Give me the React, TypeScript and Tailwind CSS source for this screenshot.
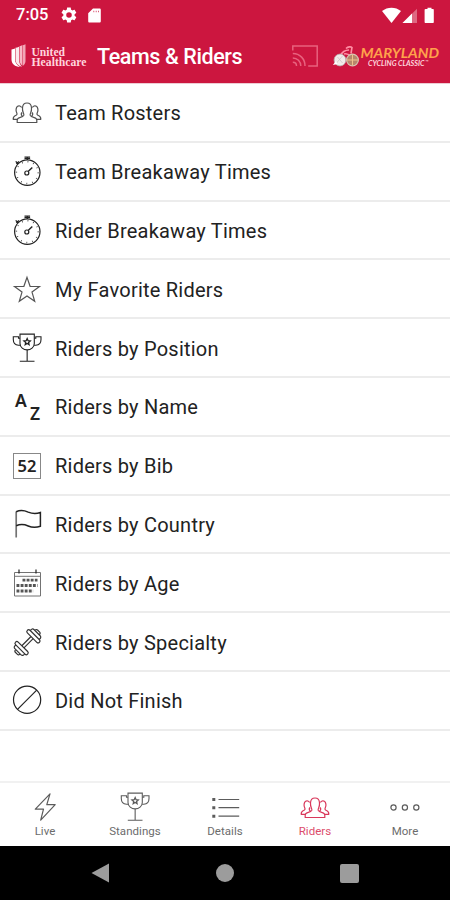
import type { ReactNode } from 'react';

function Riders({ className = '' }: { className?: string }) {
  return (
    <svg className={className} viewBox="0 0 30 30" fill="none" stroke="currentColor" strokeWidth="1.2" strokeLinejoin="round">
      <path d="M5.2 25.5v-2.2c0-1.500 1-2.300 2.500-2.700 2.200-.6 3.700-1.200 4.100-2.300.3-.9-.1-1.700-.5-2.500-.8-1.500-.9-3.300-.8-5.100.2-2.700 1.700-4.700 4.500-4.700s4.300 2 4.500 4.700c.1 1.800 0 3.600-.8 5.100-.4.800-.8 1.600-.5 2.500.4 1.100 1.900 1.700 4.100 2.300 1.500.4 2.500 1.200 2.500 2.700v2.200z" />
      <path d="M5.200 22.300H1.200c-.1-2.500.7-3.200 2.300-3.800 1.400-.5 1.900-1.300 1.200-2.700-1.100-2.100-.8-5.600.9-6.600 1.500-.8 3.300-.2 4 1.400" />
      <path d="M24.800 22.300h4c.1-2.500-.7-3.200-2.300-3.800-1.400-.5-1.900-1.300-1.200-2.700 1.100-2.100.8-5.600-.9-6.600-1.500-.8-3.300-.2-4 1.400" />
      <path d="M10 15.500c-1.100 1.300-.9 2.500.2 3.700M20 15.500c1.100 1.300.9 2.500-.2 3.700" />
    </svg>
  );
}

function Stopwatch() {
  return (
    <svg viewBox="0 0 30 30" fill="none" stroke="currentColor" strokeWidth="1.2">
      <circle cx="15.300" cy="16.600" r="12.700" />
      <circle cx="15.300" cy="16.600" r="10.900" strokeWidth="1.400" strokeDasharray="0.700 5.007" />
      <path d="M12.500 1h5.600M12.500 2.300h5.600M15.300 1v3" strokeWidth="1.200" />
      <path d="M4.300 7.800 7 5.400M3.700 5.400l2.300 2.400" strokeWidth="1.300" />
      <circle cx="14.800" cy="17" r="2" />
      <path d="m16.100 15.600 4.200-4" strokeWidth="1.400" />
    </svg>
  );
}

function Star() {
  return (
    <svg viewBox="0 0 30 30" fill="none" stroke="#555" strokeWidth="1.200">
      <path d="m15 3.400 3.100 8.900 9.400.2-7.500 5.600 2.700 9.200-7.700-5.400-7.700 5.400L10 18.100l-7.500-5.600 9.400-.2z" />
    </svg>
  );
}

function Trophy({ className = '' }: { className?: string }) {
  return (
    <svg className={className} viewBox="0 0 30 30" fill="none" stroke="currentColor" strokeWidth="1.100">
      <path d="M8 1.100h14.300v9.300c0 4-3.500 6.500-7.150 6.500S8 14.400 8 10.400z" />
      <path d="M8 5.200H6.500V3.700H1.300v2.800c0 3.200 1.900 5.500 5.200 5.700h1.700M22.300 5.200h1.500V3.700h5.200v2.800c0 3.200-1.900 5.500-5.200 5.700h-1.700M15.150 17v11M7.800 28.200h14.700" />
      <path d="m15.150 5.600.9 2.100 2.200.2-1.700 1.500.5 2.200-1.900-1.200-1.900 1.200.5-2.200L12 7.900l2.200-.2z" strokeWidth="1.300" />
    </svg>
  );
}

function Flag() {
  return (
    <svg viewBox="0 0 30 30" fill="none" stroke="currentColor" strokeWidth="1.500">
      <path d="M4.200 28.500v-26" strokeWidth="1.700" className="text-neutral-500" />
      <path d="M4.200 2.700c4.500-2 8.800-1 12 .4 3.700 1.500 7.700 1.900 12.200.4v13.800c-4.500 1.500-8.500 1.300-12.200-.3-3.200-1.400-7.500-2.200-12-.2" />
    </svg>
  );
}

function Calendar() {
  return (
    <svg viewBox="0 0 30 30" fill="none" stroke="currentColor" strokeWidth="1">
      <path d="M2.500 4.500h26v23.500h-26zM2.500 8.300h26" className="text-neutral-500" />
      <path d="M7 1.500v4M24 1.500v4" strokeWidth="1.200" />
      <g stroke="#555" strokeWidth="2.800" strokeDasharray="2.900 1.200">
        <path d="M10.500 12.200h15" />
        <path d="M4.500 17.500h21" />
        <path d="M4.500 23h16.600" />
      </g>
    </svg>
  );
}

function Dumbbell() {
  return (
    <svg viewBox="0 0 30 30" fill="none" stroke="#333" strokeWidth="1.200" strokeLinejoin="round">
      <g transform="rotate(-45 15.500 15.200)">
        <path d="M9 13.700h13M9 16.700h13" />
        <rect x="5.300" y="6.700" width="3.700" height="17" rx="1.800" />
        <rect x="22" y="6.700" width="3.700" height="17" rx="1.800" />
        <path d="M5.300 9c-2-.6-3.300.3-3.300 1.800v8.800c0 1.500 1.300 2.400 3.300 1.800M2 12.200c-1.500-.2-2.200.5-2.200 1.500v3c0 1 .7 1.700 2.200 1.500M25.700 9c2-.6 3.300.3 3.300 1.800v8.800c0 1.500-1.300 2.400-3.300 1.800M29 12.200c1.500-.2 2.200.5 2.200 1.500v3c0 1-.7 1.700-2.200 1.500" />
      </g>
    </svg>
  );
}

function NotFinished() {
  return (
    <svg viewBox="0 0 30 30" fill="none" stroke="currentColor" strokeWidth="1.200">
      <circle cx="15.100" cy="14.700" r="13.600" />
      <path d="M5.500 24.300 24.700 5.100" />
    </svg>
  );
}

function NameIcon() {
  return (
    <div className="flex justify-between pl-[3px] pr-[2px] font-['Noto_Sans',sans-serif] text-[17.500px] font-semibold leading-[22px]">
      <span className="-mt-[2px]">A</span>
      <span className="mt-[11px]">Z</span>
    </div>
  );
}

function BibIcon() {
  return (
    <div className="mx-[1px] mt-[3px] flex h-[26px] items-center justify-center border border-[#888] font-['Noto_Sans',sans-serif] text-[16.500px] font-semibold leading-[24px]">
      52
    </div>
  );
}

const rows: { label: string; icon: ReactNode }[] = [
  { label: 'Team Rosters', icon: <Riders className="text-neutral-600" /> },
  { label: 'Team Breakaway Times', icon: <Stopwatch /> },
  { label: 'Rider Breakaway Times', icon: <Stopwatch /> },
  { label: 'My Favorite Riders', icon: <Star /> },
  { label: 'Riders by Position', icon: <Trophy /> },
  { label: 'Riders by Name', icon: <NameIcon /> },
  { label: 'Riders by Bib', icon: <BibIcon /> },
  { label: 'Riders by Country', icon: <Flag /> },
  { label: 'Riders by Age', icon: <Calendar /> },
  { label: 'Riders by Specialty', icon: <Dumbbell /> },
  { label: 'Did Not Finish', icon: <NotFinished /> },
];

const tabs: { label: string; icon: ReactNode; active?: boolean }[] = [
  {
    label: 'Live',
    icon: (
      <svg viewBox="0 0 30 30" className="size-[30px]" fill="none" stroke="currentColor" strokeWidth="1.200" strokeLinejoin="round">
        <path d="M20 1.800 5.300 17.200h8.200l-2.800 10.900 14.500-15.400h-8.400z" />
      </svg>
    ),
  },
  { label: 'Standings', icon: <Trophy className="size-[30px]" /> },
  {
    label: 'Details',
    icon: (
      <svg viewBox="0 0 30 30" className="size-[30px]" stroke="currentColor" strokeWidth="1.200">
        <path d="M8.500 7.500h20.700M8.500 15.700h20.700M8.500 24.200h20.700" />
        <path d="M2.300 7.500h3M2.300 15.700h3M2.300 24.200h3" strokeWidth="3" />
      </svg>
    ),
  },
  { label: 'Riders', icon: <Riders className="size-[30px]" />, active: true },
  {
    label: 'More',
    icon: (
      <svg viewBox="0 0 30 30" className="size-[30px]" fill="none" stroke="currentColor" strokeWidth="1.200">
        <circle cx="3.500" cy="15.500" r="2.600" />
        <circle cx="14.900" cy="15.500" r="2.600" />
        <circle cx="26.300" cy="15.500" r="2.600" />
      </svg>
    ),
  },
];

function StatusBar() {
  return (
    <div className="flex h-[30px] items-center pl-4 pr-[15px] text-white">
      <span className="w-[46px] text-[16.500px] font-medium leading-none">7:05</span>
      <svg viewBox="0 0 24 24" className="-ml-[2px] size-[18px]" fill="currentColor">
        <path fillRule="evenodd" d="M19.400 13c.1-.3.1-.7.1-1s0-.7-.1-1l2.100-1.600c.2-.2.3-.4.100-.7l-2-3.400c-.1-.2-.4-.3-.6-.2l-2.500 1c-.5-.4-1.100-.7-1.700-1l-.4-2.600c0-.3-.2-.5-.5-.5h-4c-.3 0-.5.2-.5.5L9 5.100c-.6.300-1.200.6-1.700 1l-2.500-1c-.2-.1-.5 0-.6.2l-2 3.400c-.1.300-.1.500.1.700L4.500 11c0 .3-.1.700-.1 1s0 .7.100 1l-2.200 1.600c-.2.200-.2.400-.1.700l2 3.400c.1.200.4.300.6.200l2.500-1c.5.400 1.100.7 1.700 1l.4 2.600c0 .3.200.5.500.5h4c.3 0 .5-.2.500-.5l.4-2.600c.6-.3 1.200-.6 1.700-1l2.500 1c.2.100.5 0 .6-.2l2-3.400c.1-.3.1-.5-.1-.7zM12 15.700a3.700 3.700 0 1 1 0-7.400 3.700 3.700 0 0 1 0 7.400z" />
      </svg>
      <svg viewBox="0 0 13 15" className="ml-[10px] h-[15px] w-[13px]" fill="currentColor">
        <path fillRule="evenodd" d="M5 .5h6.500c.8 0 1.300.5 1.300 1.300v11.400c0 .8-.5 1.300-1.300 1.300h-10c-.8 0-1.300-.5-1.300-1.300V5.300zM5.500 2.700v1.500h.7v-1.500zM7.800 2.700v1.500h.7v-1.500zM10 2.700v1.500h.7v-1.500z" />
      </svg>
      <svg viewBox="0 0 53 17" className="ml-auto h-[17px] w-[53px]" fill="currentColor">
        <path d="M0 4.100C5.500-.5 13.500-.5 19 4.100L9.500 16z" />
        <path d="M35 1.700V16H20.500z" opacity=".35" />
        <path d="M30 6.600V16h-9.500z" />
        <path d="M43.500 2h2V.8h4V2h1.300c.6 0 1 .4 1 1v12c0 .6-.4 1-1 1h-7.200c-.6 0-1-.4-1-1V3c0-.6.300-1 .9-1z" />
      </svg>
    </div>
  );
}

function AppBar() {
  return (
    <div className="flex h-[53px] items-center pl-[11px] pr-[10px] text-white">
      <svg viewBox="0 0 76 26" className="h-[26px] w-[76px] shrink-0 font-['Liberation_Serif',serif]" fill="#ffd5dd">
        <path d="M.5 5.500c1.500-.3 2.500-.5 3.500-1v11c0 3 2 5.500 5 7.500C4 22.700.5 20 .5 15.500z" fill="#fff" />
        <path d="M4.500 3.800c1.100-.3 2.300-.6 3.500-1.100v12.800c0 3 1 5.300 3 7.200-4.300-1-6.500-4-6.500-7.500z" fill="#fff" opacity=".9" />
        <path d="M8.500 2.300c1.100-.4 2.100-.8 3-1.300v20.800c-2.200-1.500-3-3.800-3-6.300z" opacity=".85" />
        <path d="M12 1.200 14.500.3v16.500c0 2-.8 3.800-2.500 5z" opacity=".75" />
        <text x="20.500" y="11.500" fontSize="11.5" fontWeight="700" textLength="33.5" lengthAdjust="spacingAndGlyphs">United</text>
        <text x="20.500" y="21.800" fontSize="11.5" fontWeight="700" textLength="55" lengthAdjust="spacingAndGlyphs">Healthcare</text>
      </svg>
      <h1 className="ml-[10px] whitespace-nowrap text-[21.500px] font-medium leading-none tracking-[-0.400px]">Teams &amp; Riders</h1>
      <svg viewBox="0 0 26 22" className="-mt-[2px] ml-auto h-[22px] w-[26px] shrink-0" fill="none" stroke="#e8627e" strokeWidth="1.500">
        <path d="M.8 5.500V1h24.400v20h-9M.8 8.500C8 8.500 13 14 13 21M.8 13c4.500 0 8 3.500 8 8M.8 17.300c2.200 0 3.700 1.500 3.700 3.700" />
      </svg>
      <svg viewBox="0 0 108 24" className="ml-[14px] h-6 w-[108px] shrink-0">
        <path d="M8 11c2-4 5-6 9-6M12 9c3-1 5 0 8 3M14 3.500c2-2 5-2 6-1l-1 6" fill="none" stroke="#ff8ea4" strokeWidth="1.600" />
        <circle cx="8" cy="15" r="5.900" fill="#f1ebe9" stroke="#b9b0b0" strokeWidth=".8" />
        <path d="M4.500 18 10.500 11M5.500 12l5 6" stroke="#cdc5c5" strokeWidth=".8" />
        <circle cx="20.500" cy="15" r="5.900" fill="#b6876b" stroke="#d9c5b5" strokeWidth="1.100" />
        <path d="M15 15h11M20.500 9.500v11" stroke="#efc18d" strokeWidth="1" />
        <path d="M.8 20 4 16l1.500 3z" fill="#fff" />
        <text x="28.500" y="12.800" fontSize="14" fontWeight="700" fontStyle="italic" fill="#ffa24b" textLength="78.500" lengthAdjust="spacingAndGlyphs" className="font-['Lato',sans-serif]">MARYLAND</text>
        <text x="36" y="21" fontSize="6.800" fontWeight="700" fontStyle="italic" fill="#ffd9df" textLength="56.500" lengthAdjust="spacingAndGlyphs" className="font-['Lato',sans-serif]">CYCLING CLASSIC</text>
        <text x="93.500" y="19" fontSize="5.500" fill="#ffd9df">™</text>
      </svg>
    </div>
  );
}

export default function App() {
  return (
    <div className="flex h-[900px] w-[450px] flex-col overflow-hidden bg-white font-['Roboto',sans-serif]">
      <header className="h-[83px] shrink-0 bg-[#cc163f]">
        <StatusBar />
        <AppBar />
      </header>

      <main className="flex-1 border-t border-[#eecbd3]">
        {rows.map((row) => (
          <div key={row.label} className="flex h-[58.800px] items-center border-b-2 border-[#ececec] pl-3 text-[#222]">
            <div className="size-[30px] shrink-0 [&>svg]:size-full">{row.icon}</div>
            <span className="ml-[13px] mt-[2px] whitespace-nowrap text-[20px] leading-none tracking-[0.230px]">{row.label}</span>
          </div>
        ))}
      </main>

      <nav className="grid h-[65px] shrink-0 grid-cols-5 border-t-2 border-[#f1f1f1]">
        {tabs.map((tab) => (
          <div key={tab.label} className={`flex flex-col items-center pt-[9px] ${tab.active ? 'text-[#d9385b]' : 'text-[#5c5c5c]'}`}>
            {tab.icon}
            <span className="mt-[2px] text-[11.500px] leading-[14px] tracking-[0.040px] opacity-90">{tab.label}</span>
          </div>
        ))}
      </nav>

      {/* Android system navigation */}
      <div className="flex h-[54px] shrink-0 items-center justify-between bg-black pl-[91px] pr-[91px]">
        <svg viewBox="0 0 18 20" className="h-5 w-[18px]" fill="#9c9c9c">
          <path d="M18 .5v19L.5 10z" />
        </svg>
        <div className="size-[18px] rounded-full bg-[#9c9c9c]" />
        <div className="size-[19px] rounded-[2px] bg-[#9c9c9c]" />
      </div>
    </div>
  );
}
